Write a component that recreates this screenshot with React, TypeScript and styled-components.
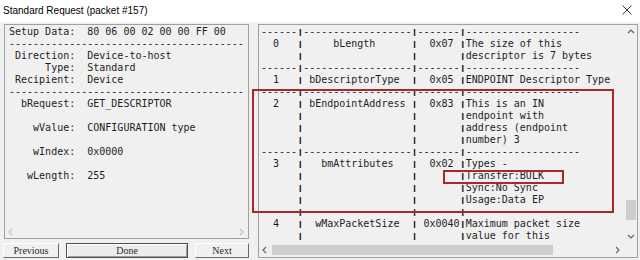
import React from "react";
import styled, { createGlobalStyle, css } from "styled-components";

const Global = createGlobalStyle`
  html, body { margin: 0; padding: 0; background: #f0f0f0; }
  body { width: 640px; height: 260px; overflow: hidden; }
  * { box-sizing: border-box; }
`;

const Window = styled.div`
  position: relative;
  width: 640px;
  height: 260px;
  background: #f0f0f0;
  display: flex;
  flex-direction: column;
  font-family: "Liberation Sans", Arial, sans-serif;
`;

const TitleBar = styled.div`
  flex: none;
  height: 22px;
  background: #ffffff;
  display: flex;
  align-items: center;
  justify-content: space-between;
  padding: 0 8px 2px 3px;
  font-size: 10px;
  color: #000;
`;

const Body = styled.div`
  flex: 1;
  min-height: 0;
  display: flex;
  gap: 9px;
  padding: 2px 2px 2px 4px;
`;

const LeftColumn = styled.div`
  flex: none;
  width: 245px;
  display: flex;
  flex-direction: column;
  gap: 4px;
`;

const LeftPanel = styled.div`
  flex: none;
  height: 215px;
  border: 1px solid #a0a0a0;
  display: flex;
  flex-direction: column;
  overflow: hidden;
`;

const RightPanel = styled.div`
  flex: 1;
  min-width: 0;
  border: 1px solid #a0a0a0;
  display: grid;
  grid-template-columns: 1fr 13px;
  grid-template-rows: 1fr 14px;
  overflow: hidden;
`;

const Listing = styled.pre<{ $left: number }>`
  flex: 1;
  min-height: 0;
  min-width: 0;
  margin: 0;
  padding: 1px 0 0 ${(p) => p.$left}px;
  font-family: "DejaVu Sans Mono", "Liberation Mono", monospace;
  font-size: 10px;
  line-height: 12px;
  color: #1e1e1e;
  white-space: pre;
  overflow: hidden;
`;

const Bar = styled.span`
  display: inline-block;
  width: 6px;
  height: 12px;
  line-height: 12px;
  vertical-align: top;
  font-family: "Liberation Mono", monospace;
  font-size: 10px;
  font-weight: bold;
  color: #111;
  text-align: center;
  transform: scaleY(0.78);
  transform-origin: 50% 50%;
`;

const HScroll = styled.div`
  display: flex;
  align-items: center;
  height: 13px;
  flex: none;
`;

const HScrollBar = styled.div`
  display: flex;
  align-items: center;
  min-width: 0;
`;

const ArrowCell = styled.div<{ $w: number; $h: number }>`
  flex: none;
  width: ${(p) => p.$w}px;
  height: ${(p) => p.$h}px;
  display: flex;
  align-items: center;
  justify-content: center;
`;

const Spacer = styled.div`
  flex: 1;
`;

const HThumb = styled.div`
  flex: none;
  height: 10px;
  margin-left: 1px;
  background: #cdcdcd;
`;

const VScroll = styled.div`
  display: flex;
  flex-direction: column;
  align-items: center;
  min-height: 0;
`;

const VThumb = styled.div`
  flex: none;
  width: 10px;
  background: #cdcdcd;
`;

const Corner = styled.div`
  background: #f0f0f0;
`;

const ButtonRow = styled.div`
  display: grid;
  grid-template-columns: 56px 122px 54px;
  gap: 7px;
  margin-left: -1px;
  height: 15px;
`;

const Button = styled.button<{ $primary?: boolean }>`
  height: 15px;
  padding: 0;
  margin: 0;
  font-family: "Liberation Serif", "Times New Roman", serif;
  font-size: 10px;
  line-height: 13px;
  color: #2a2a2a;
  background: #f0f0f0;
  border: 1px solid;
  border-color: #ffffff #6a6a6a #6a6a6a #ffffff;
  ${(p) =>
    p.$primary &&
    css`
      background: #ececec;
      border-color: #505050;
      box-shadow: inset 1px 1px 0 #ffffff, inset -1px -1px 0 #a0a0a0;
    `}
`;

const Callout = styled.div<{ $x: number; $y: number; $w: number; $h: number }>`
  position: absolute;
  left: ${(p) => p.$x}px;
  top: ${(p) => p.$y}px;
  width: ${(p) => p.$w}px;
  height: ${(p) => p.$h}px;
  border: 2px solid #a8282c;
  pointer-events: none;
`;

type Dir = "up" | "down" | "left" | "right";

const Chevron: React.FC<{ dir: Dir; color: string }> = ({ dir, color }) => {
  const pts: Record<Dir, string> = {
    up: "1,5 4,2 7,5",
    down: "1,2 4,5 7,2",
    left: "5,1 2,4 5,7",
    right: "2,1 5,4 2,7",
  };
  return (
    <svg width="8" height="8" viewBox="0 0 8 8">
      <polyline points={pts[dir]} fill="none" stroke={color} strokeWidth="1.1" />
    </svg>
  );
};

const CloseIcon = () => (
  <svg width="10" height="10" viewBox="0 0 10 10">
    <path d="M0.5 0.5 L9.5 9.5 M9.5 0.5 L0.5 9.5" stroke="#3a3a3a" strokeWidth="1" />
  </svg>
);

const leftDash = "-".repeat(39);
const leftLines = [
  "Setup Data:  80 06 00 02 00 00 FF 00",
  leftDash,
  " Direction:  Device-to-host",
  "      Type:  Standard",
  " Recipient:  Device",
  leftDash,
  "  bRequest:  GET_DESCRIPTOR",
  "",
  "    wValue:  CONFIGURATION type",
  "",
  "    wIndex:  0x0000",
  "",
  "   wLength:  255",
];

const sep = "------|------------------|-------|-------------------";
const blank = "      |                  |       |";
const rightLines = [
  sep,
  "  0   |     bLength      |  0x07 |The size of this",
  blank + "descriptor is 7 bytes",
  sep,
  "  1   | bDescriptorType  |  0x05 |ENDPOINT Descriptor Type",
  sep,
  "  2   | bEndpointAddress |  0x83 |This is an IN",
  blank + "endpoint with",
  blank + "address (endpoint",
  blank + "number) 3",
  sep,
  "  3   |   bmAttributes   |  0x02 |Types -",
  blank + "Transfer:BULK",
  blank + "Sync:No Sync",
  blank + "Usage:Data EP",
  sep,
  "  4   |  wMaxPacketSize  | 0x0040|Maximum packet size",
  blank + "value for this",
];

const TableLine: React.FC<{ text: string }> = ({ text }) => {
  const parts = text.split("|");
  return (
    <>
      {parts.map((part, i) => (
        <React.Fragment key={i}>
          {i > 0 && <Bar>|</Bar>}
          {part}
        </React.Fragment>
      ))}
    </>
  );
};

export default function App() {
  return (
    <>
      <Global />
      <Window>
        <TitleBar>
          <span>Standard Request (packet #157)</span>
          <CloseIcon />
        </TitleBar>
        <Body>
          <LeftColumn>
            <LeftPanel>
              <Listing $left={4}>{leftLines.join("\n")}</Listing>
              <HScroll>
                <ArrowCell $w={12} $h={13}>
                  <Chevron dir="left" color="#c4c4c4" />
                </ArrowCell>
                <Spacer />
                <ArrowCell $w={12} $h={13}>
                  <Chevron dir="right" color="#c4c4c4" />
                </ArrowCell>
              </HScroll>
            </LeftPanel>
            <ButtonRow>
              <Button>Previous</Button>
              <Button $primary>Done</Button>
              <Button>Next</Button>
            </ButtonRow>
          </LeftColumn>
          <RightPanel>
            <Listing $left={2}>
              {rightLines.map((line, i) => (
                <React.Fragment key={i}>
                  {i > 0 && "\n"}
                  <TableLine text={line} />
                </React.Fragment>
              ))}
            </Listing>
            <VScroll>
              <ArrowCell $w={13} $h={13}>
                <Chevron dir="up" color="#606060" />
              </ArrowCell>
              <VThumb style={{ marginTop: 162, height: 20 }} />
              <Spacer />
              <ArrowCell $w={13} $h={13}>
                <Chevron dir="down" color="#606060" />
              </ArrowCell>
            </VScroll>
            <HScrollBar>
              <ArrowCell $w={12} $h={14}>
                <Chevron dir="left" color="#606060" />
              </ArrowCell>
              <HThumb style={{ width: 281 }} />
              <Spacer />
              <ArrowCell $w={12} $h={14}>
                <Chevron dir="right" color="#606060" />
              </ArrowCell>
            </HScrollBar>
            <Corner />
          </RightPanel>
        </Body>
        <Callout $x={252} $y={89} $w={362} $h={124} />
        <Callout $x={443} $y={170} $w={121} $h={14} />
      </Window>
    </>
  );
}
